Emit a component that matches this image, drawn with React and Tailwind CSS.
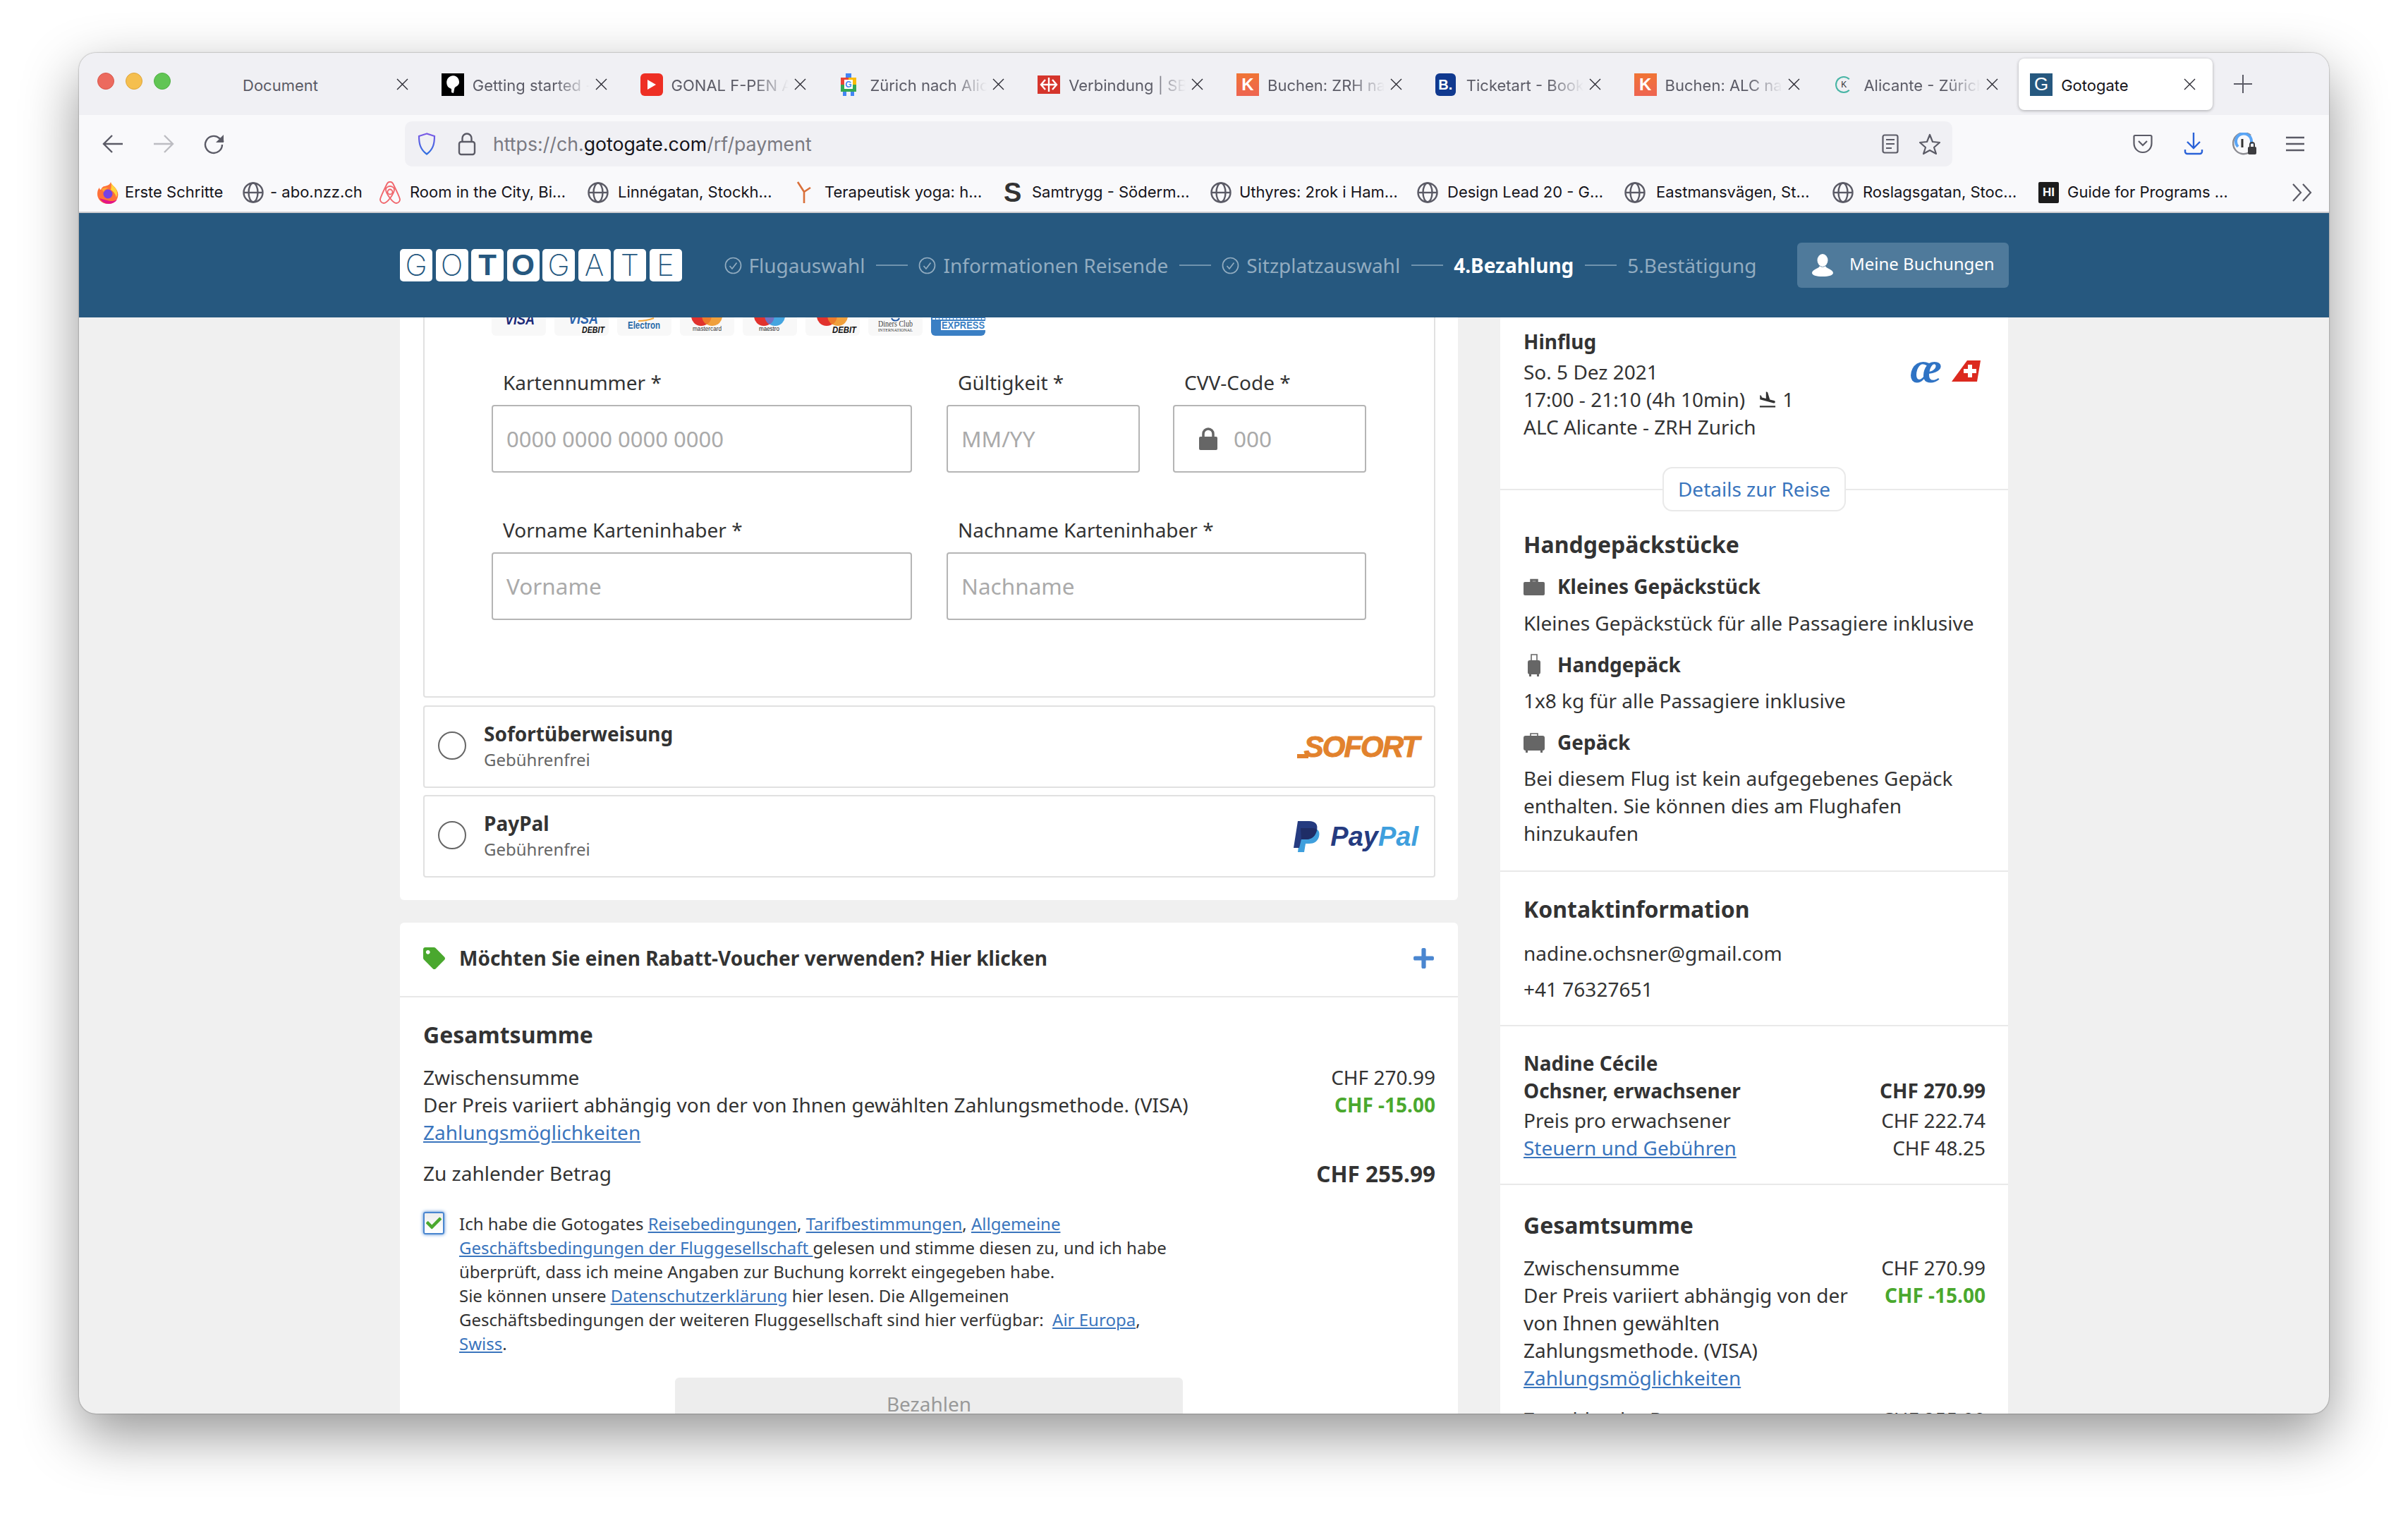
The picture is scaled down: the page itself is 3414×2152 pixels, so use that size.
import React from "react";
import { MdFlightLand } from "react-icons/md";
import { FaTag, FaCheck, FaPlus } from "react-icons/fa";

// favicons ---------------------------------------------------------------
function Globe() {
  return (
    <svg width="30" height="30" viewBox="0 0 30 30" fill="none" stroke="#5b5b66" strokeWidth="2.4">
      <circle cx="15" cy="15" r="13.5" />
      <ellipse cx="15" cy="15" rx="6.5" ry="13.5" />
      <path d="M1.5 15h27" />
    </svg>
  );
}

function FirefoxIcon() {
  return (
    <svg width="32" height="32" viewBox="0 0 32 32">
      <path d="M20 1c1 4 5 6 7 9 3 4 4 8 3 12-1 6-7 10-14 10C8 32 1 26 1 18c0-4 1-7 3-9 0 2 1 3 2 3 1-3 3-5 6-5 3-1 7-2 8-6z" fill="#ff7139" />
      <path d="M20 1c1 4 6 7 8 11 2 5 1 8 0 11-1-4-3-8-8-11 1-4 1-7 0-11z" fill="#ffd43b" />
      <path d="M4 24c3 5 8 8 13 8 5 0 9-2 12-6-4 2-9 3-14 1-4-1-8-2-11-3z" fill="#e31587" />
      <circle cx="16" cy="18" r="6.5" fill="#7542e5" />
      <path d="M7 11c3-2 7-3 10-1-3 0-6 2-7 5l-3-4z" fill="#ffa436" />
    </svg>
  );
}

function AirbnbIcon() {
  return (
    <svg width="30" height="32" viewBox="0 0 30 32" fill="none" stroke="#f0646a" strokeWidth="1.8">
      <path d="M15 24c-3-4-6-9-6-12 0-3 3-5 6-5s6 2 6 5c0 3-3 8-6 12zm0 0c-3 4-6 7-9 7-3 0-5-3-5-5 0-3 7-17 10-23 2-3 6-3 8 0 3 6 10 20 10 23 0 2-2 5-5 5-3 0-6-3-9-7z" />
      <circle cx="15" cy="15" r="3.5" />
    </svg>
  );
}

function YogaIcon() {
  return (
    <svg width="24" height="32" viewBox="0 0 24 32" fill="none" stroke="#d9703a" strokeWidth="2.6">
      <path d="M12 31V15L3 1M12 15l9-6" />
    </svg>
  );
}

function MapsIcon() {
  return (
    <svg width="22" height="32" viewBox="0 0 22 32">
      <rect x="7" y="0" width="8" height="8" fill="#4285f4" />
      <rect x="0" y="6" width="11" height="10" fill="#ea4335" />
      <rect x="11" y="6" width="11" height="10" fill="#fbbc04" />
      <rect x="0" y="16" width="22" height="10" fill="#34a853" />
      <rect x="5" y="9" width="12" height="13" fill="#fff" />
      <rect x="3" y="26" width="5" height="6" fill="#4285f4" />
      <rect x="14" y="26" width="5" height="6" fill="#4285f4" />
      <text x="11" y="20" textAnchor="middle" fontSize="12" fontWeight="700" fill="#4285f4" fontFamily="Liberation Sans">G</text>
    </svg>
  );
}

const tabs = [
  { title: "Document", icon: null },
  {
    title: "Getting started -",
    icon: (
      <div className="w-[32px] h-[32px] bg-black flex items-center justify-center">
        <svg width="22" height="26" viewBox="0 0 22 26" fill="#fff">
          <path d="M8 1c4-2 9 0 11 4 2 5 1 8-2 10-2 1-4 2-4 5l-1 5-3-1v-5c-2-1-5-2-6-5-2-5 0-11 5-13z" />
        </svg>
      </div>
    ),
  },
  {
    title: "GONAL F-PEN A",
    icon: (
      <div className="w-[32px] h-[32px] bg-[#ee2f24] rounded-[6px] flex items-center justify-center">
        <svg width="12" height="14" viewBox="0 0 12 14" fill="#fff">
          <path d="M0 0l12 7-12 7z" />
        </svg>
      </div>
    ),
  },
  { title: "Zürich nach Alic", icon: <div className="ml-[3px]"><MapsIcon /></div> },
  {
    title: "Verbindung | SB",
    icon: (
      <div className="w-[32px] h-[26px] bg-[#d5352c] flex items-center justify-center">
        <svg width="26" height="20" viewBox="0 0 26 20" fill="none" stroke="#fff" strokeWidth="2.4">
          <path d="M13 0v20M2 10h22M8 3l-6 7 6 7M18 3l6 7-6 7" />
        </svg>
      </div>
    ),
  },
  {
    title: "Buchen: ZRH na",
    icon: (
      <div className="w-[32px] h-[32px] bg-gradient-to-b from-[#f07434] to-[#ee6450] flex items-center justify-center text-white text-[24px] font-bold font-['Liberation_Sans',sans-serif]">
        K
      </div>
    ),
  },
  {
    title: "Ticketart - Book",
    icon: (
      <div className="w-[29px] h-[32px] bg-[#10398f] rounded-[6px] flex items-center justify-center text-white text-[20px] font-bold font-['Liberation_Sans',sans-serif]">
        B.
      </div>
    ),
  },
  {
    title: "Buchen: ALC nac",
    icon: (
      <div className="w-[32px] h-[32px] bg-gradient-to-b from-[#f07434] to-[#ee6450] flex items-center justify-center text-white text-[24px] font-bold font-['Liberation_Sans',sans-serif]">
        K
      </div>
    ),
  },
  {
    title: "Alicante - Zürich",
    icon: (
      <div className="ml-[4px] w-[24px] h-[24px] rounded-full border-[2px] border-[#48b5a5] border-r-transparent flex items-center justify-center text-[#333] text-[12px] font-['Liberation_Sans',sans-serif]">
        K
      </div>
    ),
  },
];

function CloseX() {
  return (
    <svg className="shrink-0" width="17" height="17" viewBox="0 0 17 17" fill="none" stroke="#2b2a33" strokeWidth="1.4">
      <path d="M1 1l15 15M16 1L1 16" />
    </svg>
  );
}

function Tab({ title, icon }) {
  return (
    <div className="w-[281.8px] h-[73px] pl-[16px] flex items-center shrink-0 text-[22px] text-[#5b5b66]">
      {icon && <div className="w-[44px] shrink-0">{icon}</div>}
      <div className={icon
        ? "w-[166px] mt-[4px] overflow-hidden whitespace-nowrap [mask-image:linear-gradient(to_right,#000_70%,transparent_100%)]"
        : "w-[210px] mt-[4px] overflow-hidden whitespace-nowrap"}>
        {title}
      </div>
      <div className="ml-[8px]"><CloseX /></div>
    </div>
  );
}

function TabBar() {
  return (
    <div className="h-[88px] bg-[#f0f0f4] flex pt-[8px] shrink-0">
      <div className="w-[216px] h-[73px] pl-[26px] flex items-center gap-[16px] shrink-0 pb-[10px]">
        <div className="w-[24px] h-[24px] rounded-full bg-[#ec6a5e] border border-[#d9574c]" />
        <div className="w-[24px] h-[24px] rounded-full bg-[#f5bf4f] border border-[#dfa53a]" />
        <div className="w-[24px] h-[24px] rounded-full bg-[#61c554] border border-[#50b044]" />
      </div>
      {tabs.map((t) => (
        <Tab key={t.title} title={t.title} icon={t.icon} />
      ))}
      <div className="w-[275px] h-[73px] -ml-[2px] pl-[16px] flex items-center bg-white rounded-[8px] shadow-[0_1px_4px_rgba(0,0,0,0.3)] text-[22px] text-[#15141a] shrink-0">
        <div className="w-[32px] h-[32px] bg-[#26587f] text-white text-[26px] font-extralight flex items-center justify-center font-['Liberation_Sans',sans-serif]">
          G
        </div>
        <div className="ml-[12px] w-[164px] mt-[4px]">Gotogate</div>
        <div className="ml-[10px]"><CloseX /></div>
      </div>
      <div className="w-[86px] h-[73px] flex items-center justify-center pb-[2px]">
        <svg width="26" height="26" viewBox="0 0 26 26" stroke="#5b5b66" strokeWidth="2">
          <path d="M13 0v26M0 13h26" />
        </svg>
      </div>
    </div>
  );
}

function ToolbarBox({ children }) {
  return <div className="w-[72px] h-[64px] flex items-center justify-center shrink-0">{children}</div>;
}

function Toolbar() {
  return (
    <div className="h-[82px] bg-[#f9f9fb] pt-[9px] pl-[12px] flex shrink-0">
      <ToolbarBox>
        <svg width="30" height="26" viewBox="0 0 30 26" fill="none" stroke="#5b5b66" strokeWidth="2.4">
          <path d="M29 13H3M14 1L2 13l12 12" />
        </svg>
      </ToolbarBox>
      <ToolbarBox>
        <svg width="30" height="26" viewBox="0 0 30 26" fill="none" stroke="#bdbdc2" strokeWidth="2.4">
          <path d="M1 13h26M16 1l12 12-12 12" />
        </svg>
      </ToolbarBox>
      <ToolbarBox>
        <svg width="30" height="30" viewBox="0 0 30 30" fill="none" stroke="#5b5b66" strokeWidth="2.4">
          <path d="M26 16a12 12 0 1 1-4-9l6 5" />
          <path d="M28 2v11H17z" fill="#5b5b66" stroke="none" />
        </svg>
      </ToolbarBox>
      <div className="ml-[234px] w-[2194px] h-[64px] bg-[#f0f0f4] rounded-[10px] flex items-center pl-[18px] pr-[16px] shrink-0">
        <svg className="shrink-0" width="26" height="32" viewBox="0 0 26 32" fill="none" strokeWidth="2.2">
          <defs>
            <linearGradient id="shield" x1="0" y1="0" x2="0" y2="1">
              <stop offset="0" stopColor="#7b5be6" />
              <stop offset="1" stopColor="#2f6fe0" />
            </linearGradient>
          </defs>
          <path d="M13 1.5L2 5c0 11 2 19 11 25.5C22 24 24 16 24 5z" stroke="url(#shield)" />
        </svg>
        <svg className="ml-[31px] shrink-0" width="26" height="34" viewBox="0 0 26 34" fill="none" stroke="#5b5b66" strokeWidth="2.4">
          <rect x="2" y="14" width="22" height="18" rx="3" />
          <path d="M6.5 14V9a6.5 6.5 0 0 1 13 0v5" />
        </svg>
        <div className="ml-[24px] text-[26.7px] text-[#7a7a82] whitespace-nowrap">
          https://ch.<span className="text-[#15141a]">gotogate.com</span>/rf/payment
        </div>
        <div className="ml-auto flex items-center gap-[28px]">
          <svg width="24" height="28" viewBox="0 0 24 28" fill="none" stroke="#5b5b66" strokeWidth="2.2">
            <rect x="1.5" y="1.5" width="21" height="25" rx="2.5" />
            <path d="M6 8h12M6 14h12M6 20h8" />
          </svg>
          <svg width="32" height="31" viewBox="0 0 32 31" fill="none" stroke="#5b5b66" strokeWidth="2.2">
            <path d="M16 2l4 10 10 1-8 7 3 9-9-5-9 5 3-9-8-7 10-1z" strokeLinejoin="round" />
          </svg>
        </div>
      </div>
      <div className="ml-[234px] flex">
        <ToolbarBox>
          <svg width="28" height="28" viewBox="0 0 28 28" fill="none" stroke="#5b5b66" strokeWidth="2.2">
            <path d="M3 2h22a1.5 1.5 0 0 1 1.5 1.5V13c0 7-5 13-12.5 13S1.5 20 1.5 13V3.500A1.500 1.500 0 0 1 3 2z" />
            <path d="M8 10l6 6 6-6" />
          </svg>
        </ToolbarBox>
        <ToolbarBox>
          <svg width="28" height="32" viewBox="0 0 28 32" fill="none" stroke="#2a62d8" strokeWidth="2.4">
            <path d="M14 0v22M5 13l9 9 9-9M2 24v3a3 3 0 0 0 3 3h18a3 3 0 0 0 3-3v-3" />
          </svg>
        </ToolbarBox>
        <ToolbarBox>
          <svg width="34" height="32" viewBox="0 0 34 32" fill="none">
            <path d="M24 28A15 15 0 1 1 26 4" stroke="#8c8c92" strokeWidth="2.4" />
            <path d="M8 20a11 11 0 1 1 19-8v4" stroke="#5aa5f5" strokeWidth="4" />
            <path d="M14 9v12" stroke="#333" strokeWidth="3" />
            <rect x="22" y="20" width="12" height="11" rx="2" fill="#3c3c3f" />
            <path d="M25 20v-3a3 3 0 0 1 6 0v3" stroke="#3c3c3f" strokeWidth="2" />
          </svg>
        </ToolbarBox>
        <ToolbarBox>
          <svg width="26" height="22" viewBox="0 0 26 22" stroke="#5b5b66" strokeWidth="2.4">
            <path d="M0 2h26M0 11h26M0 20h26" />
          </svg>
        </ToolbarBox>
      </div>
    </div>
  );
}

const bookmarks = [
  { w: "w-[207px] gap-[8px]", label: "Erste Schritte", icon: <FirefoxIcon /> },
  { w: "w-[194px] gap-[9px]", label: "- abo.nzz.ch", icon: <Globe /> },
  { w: "w-[295px] gap-[13px]", label: "Room in the City, Bi…", icon: <AirbnbIcon /> },
  { w: "w-[295px] gap-[13px]", label: "Linnégatan, Stockh…", icon: <Globe /> },
  { w: "w-[295px] gap-[17px]", label: "Terapeutisk yoga: h…", icon: <YogaIcon /> },
  {
    w: "w-[293px] gap-[10px]",
    label: "Samtrygg - Söderm…",
    icon: <div className="w-[30px] text-[38px] leading-[32px] font-bold text-[#333] font-['Liberation_Sans',sans-serif]">S</div>,
  },
  { w: "w-[293px] gap-[11px]", label: "Uthyres: 2rok i Ham…", icon: <Globe /> },
  { w: "w-[294px] gap-[13px]", label: "Design Lead 20 - G…", icon: <Globe /> },
  { w: "w-[295px] gap-[15px]", label: "Eastmansvägen, St…", icon: <Globe /> },
  { w: "w-[292px] gap-[13px]", label: "Roslagsgatan, Stoc…", icon: <Globe /> },
  {
    w: "w-[300px] gap-[12px]",
    label: "Guide for Programs …",
    icon: (
      <div className="w-[29px] h-[30px] bg-[#1c1c1c] text-white text-[17px] font-bold flex items-center justify-center rounded-[2px] font-['Liberation_Sans',sans-serif]">
        HI
      </div>
    ),
  },
];

function Bookmarks() {
  return (
    <div className="h-[57px] bg-[#f9f9fb] border-b-[2px] border-[#cccccf] pl-[25px] flex items-center shrink-0">
      {bookmarks.map((b) => (
        <div key={b.label} className={"flex items-center shrink-0 " + b.w}>
          {b.icon}
          <span className="text-[22px] text-[#15141a] whitespace-nowrap">{b.label}</span>
        </div>
      ))}
      <svg className="ml-[59px]" width="30" height="26" viewBox="0 0 30 26" fill="none" stroke="#5b5b66" strokeWidth="2.2">
        <path d="M2 1l11 12L2 25M16 1l11 12-11 12" />
      </svg>
    </div>
  );
}

// site header ------------------------------------------------------------
const logoLetters = [
  { ch: "G", bold: false },
  { ch: "O", bold: false },
  { ch: "T", bold: true },
  { ch: "O", bold: true },
  { ch: "G", bold: false },
  { ch: "A", bold: false },
  { ch: "T", bold: false },
  { ch: "E", bold: false },
];

function StepCheck() {
  return (
    <svg className="shrink-0 mr-[10px]" width="25" height="25" viewBox="0 0 25 25" fill="none" stroke="#92acc0" strokeWidth="1.7">
      <circle cx="12.5" cy="12.5" r="11" />
      <path d="M7.500 13l3.500 4 6.500-8.500" />
    </svg>
  );
}

function StepLine() {
  return <div className="w-[45px] h-[2px] bg-[#6f93ae] mx-[15.5px] shrink-0" />;
}

function SiteHeader() {
  return (
    <div className="h-[148px] bg-[#26587f] pl-[455px] pr-[454px] flex items-center shrink-0 font-['Noto_Sans',sans-serif] text-[28px] text-[#92acc0]">
      <div className="flex gap-[4.5px] mr-[60px] shrink-0">
        {logoLetters.map((l, i) => (
          <div
            key={i}
            className={
              "w-[46px] h-[46px] bg-white rounded-[5px] flex items-center justify-center text-[#26587f] text-[42px] leading-none " +
              (l.bold ? "font-bold font-['Liberation_Sans',sans-serif]" : "font-extralight font-['Inter',sans-serif]")
            }
          >
            {l.ch}
          </div>
        ))}
      </div>
      <StepCheck />
      <span className="whitespace-nowrap">Flugauswahl</span>
      <StepLine />
      <StepCheck />
      <span className="whitespace-nowrap">Informationen Reisende</span>
      <StepLine />
      <StepCheck />
      <span className="whitespace-nowrap">Sitzplatzauswahl</span>
      <StepLine />
      <span className="whitespace-nowrap font-bold text-white">4.Bezahlung</span>
      <StepLine />
      <span className="whitespace-nowrap">5.Bestätigung</span>
      <div className="ml-auto w-[300px] h-[64px] bg-[#4f7a9b] rounded-[6px] flex items-center pl-[20px] text-white text-[24px]">
        <svg width="32" height="32" viewBox="0 0 32 32" fill="#fff">
          <ellipse cx="16" cy="9" rx="7.500" ry="9" />
          <path d="M12 17c0 3-11 5-11 10 0 3 6 5 15 5s15-2 15-5c0-5-11-7-11-10-2 2-6 2-8 0z" />
        </svg>
        <span className="ml-[22px] whitespace-nowrap pb-[5px]">Meine Buchungen</span>
      </div>
    </div>
  );
}

// payment logos -----------------------------------------------------------
function CardTile({ dark, children }) {
  return (
    <svg
      width="77"
      height="26"
      viewBox="0 0 77 26"
      className={dark ? "bg-[#3a7fc4] rounded-b-[6px]" : "bg-[#f8f8f8] rounded-b-[6px]"}
    >
      {children}
    </svg>
  );
}

function McCircles({ right, overlap }) {
  return (
    <>
      <circle cx="30" cy="-2" r="14" fill="#e1322d" />
      <circle cx="46" cy="-2" r="14" fill={right} />
      <path d="M38 -14a14 14 0 0 1 0 24a14 14 0 0 1 0-24z" fill={overlap} />
    </>
  );
}

function CardLogos() {
  const arial = "Liberation Sans";
  return (
    <div className="flex gap-[12px] h-[26px]">
      <CardTile>
        <text x="19" y="10" fontSize="22" fontWeight="700" fontStyle="italic" fill="#1c2a78" fontFamily={arial} textLength="42" lengthAdjust="spacingAndGlyphs">VISA</text>
      </CardTile>
      <CardTile>
        <text x="20" y="9" fontSize="22" fontWeight="700" fontStyle="italic" fill="#2a63ad" fontFamily={arial} textLength="42" lengthAdjust="spacingAndGlyphs">VISA</text>
        <text x="39" y="22" fontSize="13" fontWeight="700" fontStyle="italic" fill="#111" fontFamily={arial} textLength="32" lengthAdjust="spacingAndGlyphs">DEBIT</text>
      </CardTile>
      <CardTile>
        <path d="M30 5c8 0 14-1 22-4" fill="none" stroke="#f0a63c" strokeWidth="2" />
        <text x="15" y="16" fontSize="14" fontWeight="700" fill="#2a6aa8" fontFamily={arial} textLength="46" lengthAdjust="spacingAndGlyphs">Electron</text>
      </CardTile>
      <CardTile>
        <McCircles right="#f0a03c" overlap="#ec7b2c" />
        <text x="18" y="19" fontSize="9.5" fill="#333" fontFamily={arial} textLength="41" lengthAdjust="spacingAndGlyphs">mastercard</text>
      </CardTile>
      <CardTile>
        <McCircles right="#45a5e0" overlap="#7470c0" />
        <text x="23" y="19" fontSize="9.5" fill="#222" fontFamily={arial} textLength="29" lengthAdjust="spacingAndGlyphs">maestro</text>
      </CardTile>
      <CardTile>
        <McCircles right="#f0a03c" overlap="#ec7b2c" />
        <text x="38" y="22" fontSize="13" fontWeight="700" fontStyle="italic" fill="#111" fontFamily={arial} textLength="34" lengthAdjust="spacingAndGlyphs">DEBIT</text>
      </CardTile>
      <CardTile>
        <path d="M33 1a6 6 0 0 0 11 0" fill="none" stroke="#2a5fa8" strokeWidth="2" />
        <text x="14" y="13" fontSize="13" fill="#444" fontFamily="Liberation Serif" textLength="49" lengthAdjust="spacingAndGlyphs">Diners Club</text>
        <text x="14" y="20" fontSize="6.5" fill="#333" fontFamily="Liberation Serif" textLength="49" lengthAdjust="spacingAndGlyphs">INTERNATIONAL</text>
      </CardTile>
      <CardTile dark>
        <path d="M2 2h75" stroke="#fff" strokeWidth="2" strokeDasharray="4 1" />
        <rect x="14" y="5" width="63" height="13" fill="#fff" />
        <text x="15" y="16" fontSize="14" fontWeight="700" fill="#3a7fc4" fontFamily={arial} textLength="61" lengthAdjust="spacingAndGlyphs">EXPRESS</text>
      </CardTile>
    </div>
  );
}

// small form pieces --------------------------------------------------------
function Field({ label, w, children }) {
  return (
    <div className={w}>
      <div className="pl-[16px] text-[28px] leading-[39px] text-[#333]">{label}</div>
      <div className="mt-[12px] h-[96px] bg-white border-[2px] border-[#b5b5b5] rounded-[4px] flex items-center pl-[19px] text-[31.5px] text-[#aaa]">
        {children}
      </div>
    </div>
  );
}

function Radio() {
  return <div className="w-[40px] h-[40px] rounded-full border-[2px] border-[#666] shrink-0 -mt-[3px]" />;
}

function PayOption({ title, logo }) {
  return (
    <div className="h-[117px] border-[2px] border-[#e1e1e1] rounded-[4px] flex items-center pl-[19px] pr-[22px]">
      <Radio />
      <div className="ml-[25px] pb-[2px]">
        <div className="text-[28px] leading-[36px] mb-[2px] font-bold text-[#333]">{title}</div>
        <div className="text-[24px] leading-[34px] text-[#666]">Gebührenfrei</div>
      </div>
      <div className="ml-auto">{logo}</div>
    </div>
  );
}

function SofortLogo() {
  return (
    <div className="flex items-end">
      <div className="w-[16px] h-[6px] bg-[#e2822d] -mr-[6px] mb-[1px]" />
      <div className="text-[42px] leading-[34px] font-bold italic tracking-[-2px] text-[#e2822d] [-webkit-text-stroke:1px_#e2822d] font-['Liberation_Sans',sans-serif]">
        SOFORT
      </div>
    </div>
  );
}

function PayPalLogo() {
  return (
    <div className="flex items-center">
      <svg width="38" height="44" viewBox="0 0 38 44">
        <path d="M10 10h16c8 0 12 4 10 12-2 7-7 10-14 10h-5l-2 12H6z" fill="#3f9fdd" />
        <path d="M6 0h16c9 0 13 5 11 13-2 8-7 13-15 13h-7l-3 12H0z" fill="#253b80" />
        <path d="M10 10h15c5 0 8 1 8 3-2 8-7 13-15 13h-7z" fill="#1f2d66" />
      </svg>
      <span className="ml-[14px] text-[38px] font-bold italic leading-none font-['Liberation_Sans',sans-serif] text-[#253b80]">
        Pay<span className="text-[#3f9fdd]">Pal</span>
      </span>
    </div>
  );
}

function PaymentCard() {
  return (
    <div className="h-[826px] bg-white rounded-b-[6px] pl-[33px] pr-[32px]">
      <div className="h-[539px] border-x-[2px] border-b-[2px] border-[#e1e1e1] rounded-b-[4px] pl-[95px]">
        <CardLogos />
        <div className="mt-[47px] flex gap-[49px]">
          <Field label="Kartennummer *" w="w-[596px]"><span className="text-[31px]">0000 0000 0000 0000</span></Field>
          <div className="flex gap-[47px]">
            <Field label="Gültigkeit *" w="w-[274px]">MM/YY</Field>
            <Field label="CVV-Code *" w="w-[274px]">
              <svg className="shrink-0 ml-[16px] mr-[23px]" width="26" height="32" viewBox="0 0 26 32">
                <path d="M6 13V9a7 7 0 0 1 14 0v4" fill="none" stroke="#666" strokeWidth="3.5" />
                <rect x="0" y="13" width="26" height="19" rx="2" fill="#666" />
              </svg>
              000
            </Field>
          </div>
        </div>
        <div className="mt-[62px] flex gap-[49px]">
          <Field label="Vorname Karteninhaber *" w="w-[596px]">Vorname</Field>
          <Field label="Nachname Karteninhaber *" w="w-[595px]">Nachname</Field>
        </div>
      </div>
      <div className="mt-[11px] flex flex-col gap-[10px]">
        <PayOption title="Sofortüberweisung" logo={<SofortLogo />} />
        <PayOption title="PayPal" logo={<PayPalLogo />} />
      </div>
    </div>
  );
}

function A({ children }) {
  return <span className="text-[#3a75bd] underline">{children}</span>;
}

function SummaryCard() {
  return (
    <div className="mt-[32px] bg-white rounded-t-[6px] text-[28px] leading-[39px] text-[#333]">
      <div className="h-[106px] border-b-[2px] border-[#e8e8e8] pl-[33px] pr-[32px] pb-[3px] flex items-center">
        <FaTag size={31} color="#4aa82e" />
        <div className="ml-[20px] font-bold">Möchten Sie einen Rabatt-Voucher verwenden? Hier klicken</div>
        <FaPlus className="ml-auto" size={33} color="#4a86d0" />
      </div>
      <div className="pl-[33px] pr-[32px] pt-[31px]">
        <div className="text-[32px] leading-[44px] font-bold">Gesamtsumme</div>
        <div className="mt-[19px] flex justify-between">
          <div>
            Zwischensumme
            <br />
            Der Preis variiert abhängig von der von Ihnen gewählten Zahlungsmethode. (VISA)
            <br />
            <A>Zahlungsmöglichkeiten</A>
          </div>
          <div className="text-right">
            CHF 270.99
            <br />
            <span className="font-bold text-[#4aa82e]">CHF -15.00</span>
          </div>
        </div>
        <div className="mt-[19px] flex justify-between items-center">
          <div>Zu zahlender Betrag</div>
          <div className="text-[31.5px] font-bold">CHF 255.99</div>
        </div>
        <div className="mt-[35px] flex">
          <div className="w-[30px] h-[32px] border-[2px] border-[#4a86d0] rounded-[3px] shadow-[0_0_5px_#4a86d0] bg-gradient-to-b from-[#eee] to-white flex items-center justify-center shrink-0">
            <FaCheck size={22} color="#4aa82e" />
          </div>
          <div className="ml-[21px] text-[24px] leading-[34px]">
            Ich habe die Gotogates <A>Reisebedingungen</A>, <A>Tarifbestimmungen</A>, <A>Allgemeine</A>
            <br />
            <A>Geschäftsbedingungen der Fluggesellschaft </A>gelesen und stimme diesen zu, und ich habe
            <br />
            überprüft, dass ich meine Angaben zur Buchung korrekt eingegeben habe.
            <br />
            Sie können unsere <A>Datenschutzerklärung</A> hier lesen. Die Allgemeinen
            <br />
            Geschäftsbedingungen der weiteren Fluggesellschaft sind hier verfügbar:{"\u00A0 "}
            <A>Air Europa</A>,
            <br />
            <A>Swiss</A>.
          </div>
        </div>
        <div className="mt-[31px] ml-[357px] w-[720px] h-[90px] bg-[#ededed] rounded-t-[6px] pt-[18px] text-center text-[#999]">
          Bezahlen
        </div>
      </div>
    </div>
  );
}

// sidebar --------------------------------------------------------------------
function BagSmall() {
  return (
    <svg width="30" height="24" viewBox="0 0 30 24" fill="#666">
      <path d="M10 5V1.5h10V5M12 3v2h6V3z" fillRule="evenodd" stroke="#666" strokeWidth="1.5" />
      <rect x="0" y="5" width="30" height="19" rx="2" />
    </svg>
  );
}

function BagHand() {
  return (
    <svg width="30" height="32" viewBox="0 0 30 32" fill="#666">
      <path d="M11 10V1h8v9" fill="none" stroke="#666" strokeWidth="1.6" />
      <rect x="6" y="9" width="18" height="20" rx="3" />
      <rect x="8" y="28" width="3" height="4" />
      <rect x="19" y="28" width="3" height="4" />
    </svg>
  );
}

function BagBig() {
  return (
    <svg width="30" height="28" viewBox="0 0 30 28" fill="#666">
      <path d="M10 5V1h10v4" fill="none" stroke="#666" strokeWidth="1.6" />
      <rect x="0" y="4" width="30" height="21" rx="3" />
      <rect x="3" y="24" width="3" height="4" />
      <rect x="24" y="24" width="3" height="4" />
    </svg>
  );
}

function BagRow({ icon, children, mt }) {
  return (
    <div className={"flex items-center font-bold " + mt}>
      <div className="w-[48px] shrink-0 flex items-center">{icon}</div>
      {children}
    </div>
  );
}

function Sidebar() {
  return (
    <div className="w-[720px] bg-white text-[28px] leading-[39px] text-[#333] shrink-0">
      <div className="pl-[33px] pr-[32px] pt-[15px] relative">
        <div className="font-bold">Hinflug</div>
        <div className="mt-[4px]">So. 5 Dez 2021</div>
        <div className="flex items-center">
          17:00 - 21:10 (4h 10min)
          <MdFlightLand className="ml-[18px] mr-[7px]" size={28} />1
        </div>
        <div>ALC Alicante - ZRH Zurich</div>
        <div className="absolute right-[39px] top-[54px] flex items-center gap-[14px]">
          <div className="text-[62px] leading-[34px] italic font-bold text-[#2f73c4] font-['Liberation_Serif',serif] pb-[10px]">æ</div>
          <svg width="41" height="30" viewBox="0 0 41 30">
            <path d="M22 0h19l-5 30H0z" fill="#dc2a1f" />
            <path d="M23 6h6v6h6v6h-6v6h-6v-6h-6v-6h6z" fill="#fff" />
          </svg>
        </div>
      </div>
      <div className="mt-[37px] h-[63px] flex items-center">
        <div className="flex-1 h-[2px] bg-[#e9e9e9]" />
        <div className="w-[260px] h-[63px] border-[2px] border-[#e9e9e9] rounded-[14px] flex items-center justify-center text-[#3a75bd]">
          Details zur Reise
        </div>
        <div className="flex-1 h-[2px] bg-[#e9e9e9]" />
      </div>
      <div className="pl-[33px] pr-[32px] pt-[25px] pb-[33px] border-b-[2px] border-[#e9e9e9]">
        <div className="text-[32px] leading-[44px] font-bold">Handgepäckstücke</div>
        <BagRow icon={<BagSmall />} mt="mt-[18px]">Kleines Gepäckstück</BagRow>
        <div className="mt-[13px]">Kleines Gepäckstück für alle Passagiere inklusive</div>
        <BagRow icon={<BagHand />} mt="mt-[20px]">Handgepäck</BagRow>
        <div className="mt-[12px]">1x8 kg für alle Passagiere inklusive</div>
        <BagRow icon={<BagBig />} mt="mt-[20px]">Gepäck</BagRow>
        <div className="mt-[12px]">
          Bei diesem Flug ist kein aufgegebenes Gepäck
          <br />
          enthalten. Sie können dies am Flughafen
          <br />
          hinzukaufen
        </div>
      </div>
      <div className="pl-[33px] pr-[32px] pt-[31px] pb-[31px] border-b-[2px] border-[#e9e9e9]">
        <div className="text-[32px] leading-[44px] font-bold">Kontaktinformation</div>
        <div className="mt-[21px]">nadine.ochsner@gmail.com</div>
        <div className="mt-[12px]">+41 76327651</div>
      </div>
      <div className="pl-[33px] pr-[32px] pt-[33px] pb-[31px] border-b-[2px] border-[#e9e9e9]">
        <div className="font-bold">Nadine Cécile</div>
        <div className="flex justify-between font-bold">
          <span>Ochsner, erwachsener</span>
          <span>CHF 270.99</span>
        </div>
        <div className="mt-[3px] flex justify-between">
          <span>Preis pro erwachsener</span>
          <span>CHF 222.74</span>
        </div>
        <div className="flex justify-between">
          <A>Steuern und Gebühren</A>
          <span>CHF 48.25</span>
        </div>
      </div>
      <div className="pl-[33px] pr-[32px] pt-[35px]">
        <div className="text-[32px] leading-[44px] font-bold">Gesamtsumme</div>
        <div className="mt-[19px] flex justify-between">
          <div>
            Zwischensumme
            <br />
            Der Preis variiert abhängig von der
            <br />
            von Ihnen gewählten
            <br />
            Zahlungsmethode. (VISA)
            <br />
            <A>Zahlungsmöglichkeiten</A>
          </div>
          <div className="text-right">
            CHF 270.99
            <br />
            <span className="font-bold text-[#4aa82e]">CHF -15.00</span>
          </div>
        </div>
        <div className="mt-[20px] flex justify-between">
          <span>Zu zahlender Betrag</span>
          <span>CHF 255.99</span>
        </div>
      </div>
    </div>
  );
}

export default function App() {
  return (
    <div className="w-[3414px] h-[2152px] bg-white pt-[75px] pl-[112px] overflow-hidden font-['Inter',sans-serif]">
      <div className="w-[3190px] h-[1929px] rounded-[24px] overflow-hidden flex flex-col bg-[#f0f0f0] shadow-[0_30px_80px_rgba(0,0,0,0.42),0_0_2px_rgba(0,0,0,0.5)]">
        <TabBar />
        <Toolbar />
        <Bookmarks />
        <SiteHeader />
        <div className="flex-1 min-h-0 flex pl-[455px] gap-[60px] overflow-hidden font-['Noto_Sans',sans-serif]">
          <div className="w-[1500px] shrink-0 text-[#333]">
            <PaymentCard />
            <SummaryCard />
          </div>
          <Sidebar />
        </div>
      </div>
    </div>
  );
}
